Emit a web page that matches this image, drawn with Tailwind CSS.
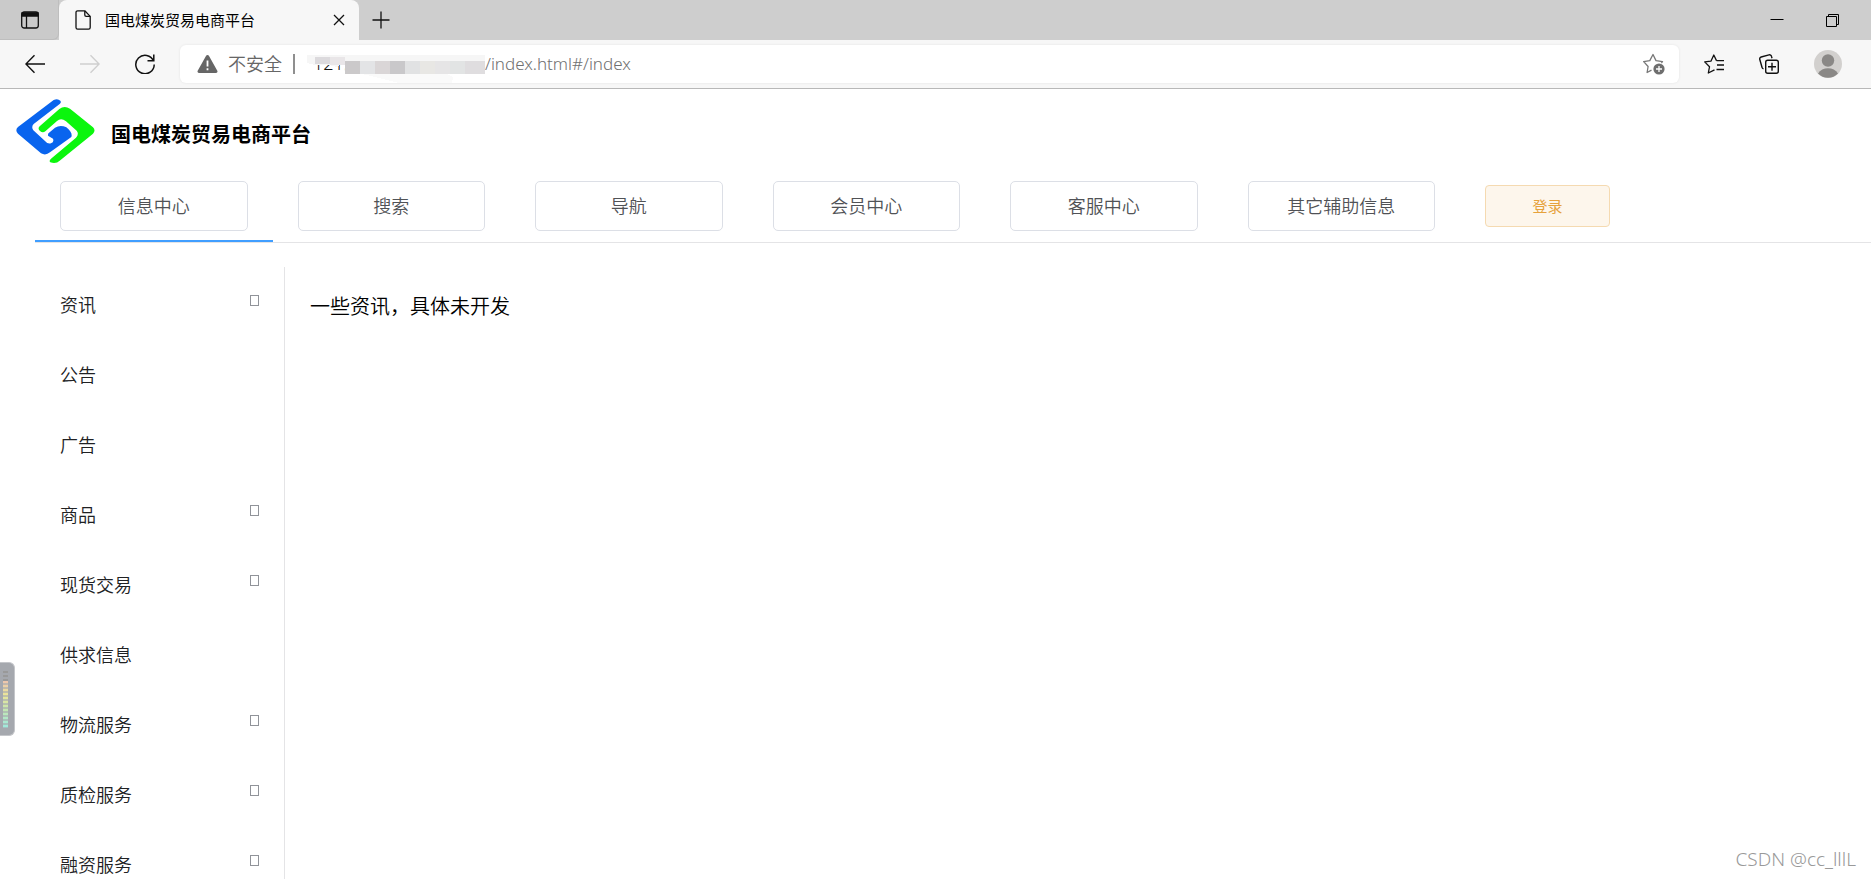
<!DOCTYPE html>
<html lang="zh-CN">
<head>
    <meta charset="UTF-8">
    <meta name="viewport" content="width=device-width, initial-scale=1.0">
    <title>国电煤炭贸易电商平台</title>
    <script src="https://cdn.jsdelivr.net/npm/@tailwindcss/browser@4"></script>
</head>
<body class="relative flex h-screen flex-col overflow-hidden bg-white font-['Noto_Sans','Noto_Sans_CJK_SC',sans-serif] font-[350] text-black">

    <!-- Tab strip -->
    <div class="flex h-10 shrink-0 items-stretch bg-[#cecece]">
        <button class="flex w-[59px] items-center justify-center rounded-br-md border-r border-b border-[#bebebe] bg-[#cacaca] pl-0.5" aria-label="标签页操作">
            <svg class="h-5 w-5" viewBox="0 0 20 20" fill="none" stroke="#111" stroke-width="1.3">
                <rect x="1.7" y="2" width="16.6" height="16" rx="2.5"/>
                <path d="M2 2.8h16V6H2z" fill="#111"/>
                <path d="M6.5 6v12"/>
            </svg>
        </button>
        <div class="flex w-[300px] items-center rounded-t-lg bg-[#f7f7f7] pr-2 pl-4">
            <svg class="h-5 w-4 shrink-0" viewBox="0 0 16 20" fill="none" stroke="#111" stroke-width="1.3" stroke-linejoin="round">
                <path d="M2.6.8h7.2l5.4 5.6v11.2a1.6 1.6 0 0 1-1.6 1.6h-11A1.6 1.6 0 0 1 1 17.6V2.4A1.6 1.6 0 0 1 2.6.8z"/>
                <path d="M9.8 1v4a1.4 1.4 0 0 0 1.4 1.4h4"/>
            </svg>
            <span class="ml-3.5 flex-1 text-[15px] leading-5 font-normal">国电煤炭贸易电商平台</span>
            <button class="flex h-6 w-6 items-center justify-center" aria-label="关闭标签页">
                <svg class="h-3 w-3" viewBox="0 0 12 12" stroke="#111" stroke-width="1.3"><path d="M1 1l10 10M11 1L1 11"/></svg>
            </button>
        </div>
        <button class="flex w-11 items-center justify-center" aria-label="新建标签页">
            <svg class="h-[18px] w-[18px]" viewBox="0 0 18 18" stroke="#111" stroke-width="1.3"><path d="M9 .5v17M.5 9h17"/></svg>
        </button>
        <div class="flex-1"></div>
        <button class="flex w-14 items-center justify-center" aria-label="最小化">
            <svg class="h-3.5 w-3.5" viewBox="0 0 14 14" stroke="#000"><path d="M.5 6.5h13"/></svg>
        </button>
        <button class="mr-2.5 flex w-14 items-center justify-center" aria-label="还原">
            <svg class="h-3.5 w-3.5" viewBox="0 0 14 14" fill="none" stroke="#000"><path d="M.5 3.500h10v10H.5z"/><path d="M2.500 3.500v-2h10v10h-2"/></svg>
        </button>
    </div>

    <!-- Toolbar -->
    <div class="flex h-[49px] shrink-0 items-center border-b border-[#b8b8b8] bg-[#f7f7f7] pr-[29px]">
        <div class="flex w-[180px] gap-[35px] pl-[25px]">
            <button aria-label="后退">
                <svg class="h-5 w-5" viewBox="0 0 20 20" fill="none" stroke="#111" stroke-width="1.4"><path d="M20 10H1M9.500 1.200L.9 10l8.600 8.800"/></svg>
            </button>
            <button aria-label="前进" disabled>
                <svg class="h-5 w-5" viewBox="0 0 20 20" fill="none" stroke="#cfcfcf" stroke-width="1.4"><path d="M0 10h19M10.500 1.200l8.600 8.800-8.600 8.800"/></svg>
            </button>
            <button aria-label="刷新">
                <svg class="h-5 w-5" viewBox="0 0 20 20" fill="none" stroke="#111" stroke-width="1.5"><path d="M18.500 7A9.200 9.200 0 1 0 19.200 10.500M18.800.5v6.300h-6.300"/></svg>
            </button>
        </div>
        <div class="flex h-[38px] flex-1 items-center rounded-md bg-white pl-[17px] shadow-[0_0_3px_rgba(0,0,0,0.08)]">
            <svg class="h-5 w-[21px] shrink-0" viewBox="0 0 21 20">
                <path d="M10.500 1a1.600 1.600 0 0 1 1.400.8l8.400 15a1.500 1.500 0 0 1-1.300 2.200H2a1.500 1.500 0 0 1-1.300-2.200l8.400-15A1.600 1.600 0 0 1 10.500 1z" fill="#666"/>
                <path d="M10.500 6.500v6M10.500 14.200v2" stroke="#fff" stroke-width="1.800"/>
            </svg>
            <span class="ml-2.5 text-lg leading-6 text-[#666]">不安全</span>
            <span class="ml-[11px] h-5 w-0.5 bg-[#8f8f8f]"></span>
            <!-- Masked host -->
            <svg class="ml-3 h-[38px] w-[178px] shrink-0" viewBox="0 0 178 38" shape-rendering="crispEdges">
                <text x="6" y="25" font-size="18" fill="#111">121.</text>
                <path d="M0 10h178v9H34l-4 3-8-2H8l-8-2z" fill="#f6f6f6"/>
                <path d="M8 12h15v7H8z" fill="#dcdadd"/>
                <path d="M23 12h15v8H23z" fill="#e9e6e8"/>
                <path d="M34 25l80-2 20 3 12 6-1 6H92L60 30z" fill="#fafafa"/>
                <path d="M38 16h15v13H38z" fill="#cbc9ca"/>
                <path d="M53 16h15v13H53z" fill="#e3e4e6"/>
                <path d="M68 16h15v13H68z" fill="#dad6d7"/>
                <path d="M83 16h15v13H83z" fill="#c9c8ca"/>
                <path d="M98 16h15v13H98z" fill="#e1e2e3"/>
                <path d="M113 16h15v13H113z" fill="#e8e7e4"/>
                <path d="M128 16h15v13H128z" fill="#e6e5e6"/>
                <path d="M143 16h15v13H143z" fill="#e2e4e4"/>
                <path d="M158 16h20v13H158z" fill="#dfdddf"/>
            </svg>
            <input type="text" class="min-w-0 flex-1 bg-transparent text-[17px] leading-6 text-[#707070] outline-none" value="/index.html#/index" aria-label="地址栏">
            <button class="mr-3.5" aria-label="添加到收藏夹">
                <svg class="h-[22px] w-[22px]" viewBox="0 0 22 22" fill="none" stroke="#777" stroke-width="1.3" stroke-linejoin="round">
                    <path d="M8.500 17.200l-4.400 2.300 1-6L.7 8.600l6.100-1L10 1.500l3 6.100 6.500 1-1.200 1.400"/>
                    <circle cx="16" cy="16" r="5.600" fill="#6e6e6e" stroke="none"/>
                    <path d="M16 13v6M13 16h6" stroke="#fff"/>
                </svg>
            </button>
        </div>
        <div class="flex items-center gap-[35px] pl-[25px]">
            <button aria-label="收藏夹">
                <svg class="h-5 w-5" viewBox="0 0 20 20" fill="none" stroke="#111" stroke-width="1.3" stroke-linejoin="round">
                    <path d="M10.500 15.800l-6.200 3.200 1.200-6.200L.7 7.900l6.200-.7L9.800 1l2.700 5.600M12.500 6.600H20M13 11h7M12.500 15.500H20"/>
                </svg>
            </button>
            <button aria-label="集锦">
                <svg class="h-5 w-5" viewBox="0 0 20 20" fill="none" stroke="#111" stroke-width="1.4" stroke-linejoin="round">
                    <path d="M4.500 14.800a2 2 0 0 1-1.500-1.500L.8 5.500A2 2 0 0 1 2.200 3L10 .9a2 2 0 0 1 2.500 1.500l.5 1.800"/>
                    <rect x="6.700" y="6.200" width="12.600" height="13" rx="2"/>
                    <path d="M13 8.700v8M9 12.700h8"/>
                </svg>
            </button>
            <button aria-label="个人资料">
                <svg class="h-7 w-7" viewBox="0 0 28 28">
                    <circle cx="14" cy="14" r="14" fill="#d2d0ce"/>
                    <circle cx="14" cy="10.500" r="6.200" fill="#8a8886"/>
                    <path d="M4 23.500C6 20 10 18.300 14 18.300s8 1.700 10 5.200A14 14 0 0 1 4 23.500z" fill="#8a8886"/>
                </svg>
            </button>
        </div>
    </div>

    <!-- Site header -->
    <header class="flex h-[82px] shrink-0 items-center pt-0.5 pl-[15px]">
        <svg class="h-[66px] w-20" viewBox="48 24 240 198" stroke-linejoin="round">
            <path d="M164 30Q176 24 184 32Q188 37 182 42L104 102Q96 110 103 121L138 153Q146 163 156 160Q166 156 162 146L147 137Q146 130 152 127L168 113Q184 103 202 112Q222 128 217 141L153 187Q140 198 126 190L57 131Q47 120 57 111Z" fill="#0964ee"/>
            <path d="M122 109L181 57Q196 46 213 56L282 112Q291 121 282 131L182 212Q172 222 154 217Q149 212 156 206L231 143Q241 133 233 122L201 94Q186 82 174 93L139 124Q131 130 123 123Q115 116 122 109Z" fill="#0bf60d"/>
        </svg>
        <h1 class="ml-4 pt-2 text-xl leading-7 font-bold">国电煤炭贸易电商平台</h1>
    </header>

    <!-- Main navigation -->
    <nav class="ml-[35px] flex h-[72px] shrink-0 items-start border-b border-[#e4e4e6]">
        <div class="flex w-[1425px] text-lg leading-6 text-[#505256]">
            <div class="flex-1 border-b-2 border-[#409eff] px-[25px] pt-2.5 pb-[9px]">
                <button class="h-[50px] w-full rounded-[5px] border border-[#dcdfe6]">信息中心</button>
            </div>
            <div class="flex-1 px-[25px] pt-2.5">
                <button class="h-[50px] w-full rounded-[5px] border border-[#dcdfe6]">搜索</button>
            </div>
            <div class="flex-1 px-[25px] pt-2.5">
                <button class="h-[50px] w-full rounded-[5px] border border-[#dcdfe6]">导航</button>
            </div>
            <div class="flex-1 px-[25px] pt-2.5">
                <button class="h-[50px] w-full rounded-[5px] border border-[#dcdfe6]">会员中心</button>
            </div>
            <div class="flex-1 px-[25px] pt-2.5">
                <button class="h-[50px] w-full rounded-[5px] border border-[#dcdfe6]">客服中心</button>
            </div>
            <div class="flex-1 px-[25px] pt-2.5">
                <button class="h-[50px] w-full rounded-[5px] border border-[#dcdfe6]">其它辅助信息</button>
            </div>
        </div>
        <div class="px-[25px] pt-3.5">
            <button class="h-[42px] w-[125px] rounded-[4px] border border-[#f5dab1] bg-[#fdf6ec] text-[15px] leading-5 font-normal text-[#e6a23c]">登录</button>
        </div>
    </nav>

    <div class="flex min-h-0 flex-1 pt-6">
        <!-- Side menu -->
        <aside class="ml-[35px] w-[250px] shrink-0 border-r border-[#e4e4e6] pt-[3px]">
            <ul class="text-lg leading-6 text-[#202123]">
                <li class="flex h-[70px] items-center justify-between px-[25px]">
                    <a href="#">资讯</a>
                    <span class="mb-2.5 h-[11px] w-[9px] border border-[#909399]"></span>
                </li>
                <li class="flex h-[70px] items-center px-[25px]"><a href="#">公告</a></li>
                <li class="flex h-[70px] items-center px-[25px]"><a href="#">广告</a></li>
                <li class="flex h-[70px] items-center justify-between px-[25px]">
                    <a href="#">商品</a>
                    <span class="mb-2.5 h-[11px] w-[9px] border border-[#909399]"></span>
                </li>
                <li class="flex h-[70px] items-center justify-between px-[25px]">
                    <a href="#">现货交易</a>
                    <span class="mb-2.5 h-[11px] w-[9px] border border-[#909399]"></span>
                </li>
                <li class="flex h-[70px] items-center px-[25px]"><a href="#">供求信息</a></li>
                <li class="flex h-[70px] items-center justify-between px-[25px]">
                    <a href="#">物流服务</a>
                    <span class="mb-2.5 h-[11px] w-[9px] border border-[#909399]"></span>
                </li>
                <li class="flex h-[70px] items-center justify-between px-[25px]">
                    <a href="#">质检服务</a>
                    <span class="mb-2.5 h-[11px] w-[9px] border border-[#909399]"></span>
                </li>
                <li class="flex h-[70px] items-center justify-between px-[25px]">
                    <a href="#">融资服务</a>
                    <span class="mb-2.5 h-[11px] w-[9px] border border-[#909399]"></span>
                </li>
            </ul>
        </aside>
        <main class="flex-1 px-[25px] pt-[26px] text-xl leading-7">一些资讯，具体未开发</main>
    </div>

    <!-- Level meter docked on the left edge -->
    <div class="absolute bottom-[143px] left-0 h-[74px] w-[15px] rounded-r-md border border-l-0 border-[#c4c6ca] bg-[#a5a8ae] pt-2 pl-[3px]">
        <div class="h-2.5 w-[5px] bg-[repeating-linear-gradient(#999_0_2px,#a5a8ae_2px_4px)]"></div>
        <div class="h-[47px] w-[5px] bg-[repeating-linear-gradient(transparent_0_2px,#a5a8ae99_2px_4px),linear-gradient(#eec5ae,#ebe59a_30%,#c5e6b0_60%,#9eeadf)]"></div>
    </div>

    <div class="absolute right-[15px] bottom-2 text-[19px] leading-6 text-[#999]">CSDN @cc_lllL</div>
</body>
</html>
